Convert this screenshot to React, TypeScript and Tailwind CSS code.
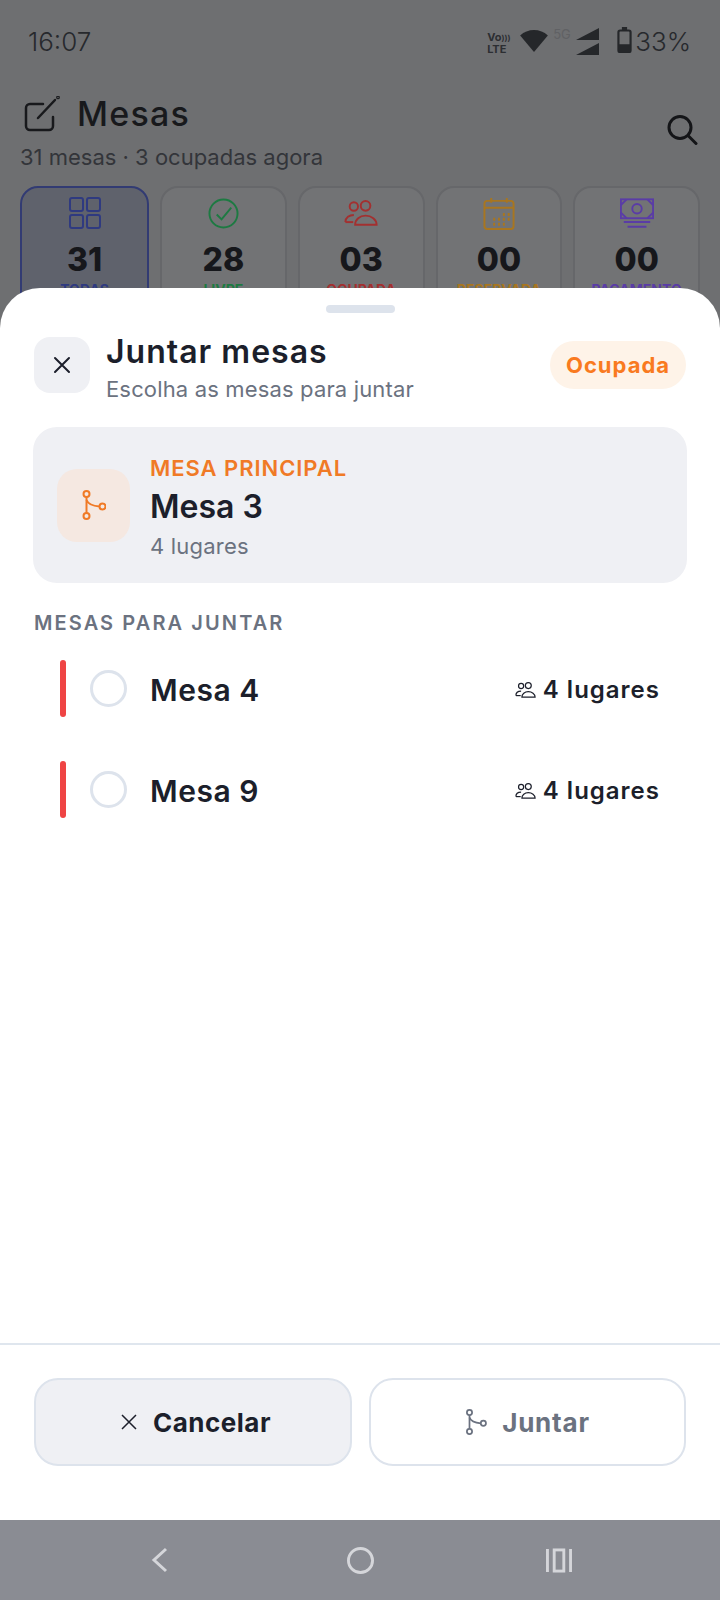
const F = "font-['Inter','Liberation_Sans',sans-serif]";

function Merge({ className, sw = 2 }: { className: string; sw?: number }) {
  return (
    <svg viewBox="0 0 24 30" fill="none" stroke="currentColor" strokeWidth={sw} className={className}>
      <circle cx="4.500" cy="4" r="3" />
      <circle cx="4.500" cy="26" r="3" />
      <circle cx="20.500" cy="16.500" r="3" />
      <path d="M4.500 7V23" />
      <path d="M4.500 10C6 14 11 16 17.500 16.500" />
    </svg>
  );
}

function Users({ className, sw = 1.5 }: { className: string; sw?: number }) {
  return (
    <svg viewBox="0 0 26 20" fill="none" stroke="currentColor" strokeWidth={sw} className={className}>
      <circle cx="7.500" cy="5" r="3.200" />
      <circle cx="16.500" cy="4.500" r="3.700" />
      <path d="M1 17c0-3.500 3-5.500 6.500-5.500" />
      <path d="M1 17h6" />
      <path d="M8.500 19c0-4 3.500-7 8-7s8.500 3 8.500 7Z" />
    </svg>
  );
}

function StatCard({ n, label, color, active, icon }: { n: string; label: string; color: string; active?: boolean; icon: React.ReactNode }) {
  return (
    <div className={`flex h-[130px] flex-col items-center rounded-[18px] border-2 pt-[3px] ${active ? "w-[129px] border-[#323b73] bg-[#5f626c]" : "flex-1 border-[#66676a] bg-[#727375]"}`}>
      <div className="flex h-[44px] items-center justify-center" style={{ color }}>{icon}</div>
      <div className="mt-[5px] text-[32px] leading-[40px] font-extrabold text-[#16171b]">{n}</div>
      <div className="mt-[2px] text-[14px] leading-[16px] font-bold whitespace-nowrap" style={{ color }}>{label}</div>
    </div>
  );
}

function Row({ name }: { name: string }) {
  return (
    <div className="flex h-[101px] items-start px-[60px]">
      <div className="h-[57px] w-[6px] rounded-full bg-[#ef4444]" />
      <div className="mt-[10px] ml-[24px] h-[37px] w-[37px] rounded-full border-[3px] border-[#dde3ec]" />
      <div className="mt-[10px] ml-[23px] flex-1 text-[30px] leading-[40px] font-semibold tracking-[0.5px] text-[#1c1f2b]">{name}</div>
      <div className="mt-[10px] flex items-center gap-[7px] text-[#1c1f2b]">
        <Users className="h-[16px] w-[21px]" sw={1.5} />
        <span className="text-[24px] leading-[40px] font-semibold tracking-[1px]">4 lugares</span>
      </div>
    </div>
  );
}

export default function App() {
  return (
    <div className={`${F} relative h-[1600px] w-[720px] overflow-hidden bg-[#6e6f71]`}>
      {/* Dimmed page behind the sheet */}
      <div className="flex h-[86px] items-start justify-between pt-[24px] pr-[29px] pl-[28px] text-[#27292d]">
        <span className="text-[26px] leading-[36px] font-light">16:07</span>
        <div className="flex items-start">
          <div className="mt-[8px] w-[22px] text-[11px] leading-[11px] font-bold whitespace-nowrap text-[#2c2e32]">Vo<span className="text-[8px]">)))</span><br />LTE</div>
          <svg viewBox="0 0 30 26" className="mt-[5px] ml-[11px] h-[24px] w-[28px]" fill="#25272a"><path d="M15 25L0 7C8-1 22-1 30 7Z" /></svg>
          <span className="mt-[3px] ml-[5px] w-[20px] text-[13px] leading-[14px] text-[#606164]">5G</span>
          <svg viewBox="0 0 23 27" className="mt-[4px] ml-[3px] h-[27px] w-[23px]" fill="#25272a"><path d="M0 12L23 0V12ZM0 27L23 15V27Z" /></svg>
          <svg viewBox="0 0 16 30" className="mt-[3px] ml-[18px] h-[26px] w-[15px]" fill="none"><rect x="1" y="4" width="14" height="25" rx="2" stroke="#25272a" strokeWidth="2.500" /><rect x="5" y="0" width="6" height="4" fill="#25272a" /><rect x="1" y="20" width="14" height="9" rx="1" fill="#25272a" /></svg>
          <span className="ml-[3px] text-[26px] leading-[36px] font-light">33%</span>
        </div>
      </div>
      <div className="flex items-start justify-between pr-[22px] pl-[20px]">
        <div>
          <div className="flex h-[56px] items-center pl-[4px]">
            <svg viewBox="0 0 36 36" className="h-[36px] w-[36px]" fill="none" stroke="#18191c" strokeWidth="2.500" strokeLinecap="round">
              <path d="M19 8H6a4 4 0 0 0-4 4v18a4 4 0 0 0 4 4h19a4 4 0 0 0 4-4V21" />
              <path d="M14 22L31 4" />
              <circle cx="34" cy="1.500" r="0.600" />
            </svg>
            <span className="ml-[17px] text-[34px] leading-[44px] font-medium tracking-[1.2px] text-[#18191c]">Mesas</span>
          </div>
          <div className="text-[22px] leading-[30px] text-[#33353a]">31 mesas · 3 ocupadas agora</div>
        </div>
        <svg viewBox="0 0 30 30" className="mt-[29px] h-[30px] w-[31px]" fill="none" stroke="#141518" strokeWidth="3" strokeLinecap="round">
          <circle cx="12.500" cy="12.500" r="11" /><path d="M21 21L28.500 28.500" />
        </svg>
      </div>
      <div className="mt-[14px] flex gap-[11px] px-[20px]">
        <StatCard n="31" label="TODAS" color="#2f3a80" active icon={
          <svg viewBox="0 0 32 32" className="h-[32px] w-[32px]" fill="none" stroke="currentColor" strokeWidth="2"><rect x="1" y="1" width="13" height="13" rx="2" /><rect x="18" y="1" width="13" height="13" rx="2" /><rect x="1" y="18" width="13" height="13" rx="2" /><rect x="18" y="18" width="13" height="13" rx="2" /></svg>
        } />
        <StatCard n="28" label="LIVRE" color="#1d7a42" icon={
          <svg viewBox="0 0 32 32" className="h-[31px] w-[31px]" fill="none" stroke="currentColor" strokeWidth="2"><circle cx="16" cy="16" r="14.500" /><path d="M9 17l5 5 10-12" /></svg>
        } />
        <StatCard n="03" label="OCUPADA" color="#a33030" icon={<Users className="h-[26px] w-[34px]" sw={1.500} />} />
        <StatCard n="00" label="RESERVADA" color="#a87620" icon={
          <svg viewBox="0 0 32 34" className="h-[33px] w-[32px]" fill="none" stroke="currentColor" strokeWidth="2"><rect x="1" y="4" width="30" height="29" rx="3" /><path d="M1 11H31M8 1V6M24 1V6" /><path strokeWidth="3" d="M10 23h2M15 23h2M20 23h2M25 23h2M10 28h2M15 28h2M20 28h2M20 18h2M25 18h2" /></svg>
        } />
        <StatCard n="00" label="PAGAMENTO" color="#5a3ca6" icon={
          <svg viewBox="0 0 36 32" className="h-[31px] w-[34px]" fill="none" stroke="currentColor" strokeWidth="2"><rect x="1" y="1" width="34" height="20" /><circle cx="18" cy="11" r="5" /><path d="M7 1L1 7M29 1L35 7M7 21L1 15M29 21L35 15M4 25H32M8 30H28" /></svg>
        } />
      </div>

      {/* Bottom sheet, above the dimmed page */}
      <div className="absolute inset-x-0 top-[288px] flex h-[1232px] flex-col rounded-t-[40px] bg-white">
        <div className="flex justify-center pt-[17px]">
          <div className="h-[8px] w-[69px] rounded-full bg-[#dde3ec]" />
        </div>
        <div className="mt-[24px] flex items-start px-[34px]">
          <div className="flex h-[56px] w-[56px] items-center justify-center rounded-[16px] bg-[#eff0f4]">
            <svg viewBox="0 0 18 18" className="h-[18px] w-[18px]" stroke="#1c1f2b" strokeWidth="2" strokeLinecap="round"><path d="M2 2L16 16M16 2L2 16" /></svg>
          </div>
          <div className="ml-[16px] flex-1">
            <div className="-mt-[5px] text-[32px] leading-[40px] font-semibold tracking-[1px] text-[#1c1f2b]">Juntar mesas</div>
            <div className="mt-[2px] text-[22px] leading-[30px] tracking-[0.15px] text-[#6b7280]">Escolha as mesas para juntar</div>
          </div>
          <div className="mt-[4px] flex h-[48px] w-[136px] items-center justify-center rounded-full bg-[#fef3e8] text-[22px] font-bold tracking-[1px] text-[#f97a1f]">Ocupada</div>
        </div>
        <div className="mx-[33px] mt-[23px] flex h-[156px] items-center rounded-[24px] bg-[#eff0f4] pl-[24px]">
          <div className="flex h-[73px] w-[73px] items-center justify-center rounded-[20px] bg-[#f5e8e1] text-[#f07a26]">
            <Merge className="h-[30px] w-[24px]" />
          </div>
          <div className="mt-[4px] ml-[20px]">
            <div className="text-[22px] leading-[28px] font-semibold tracking-[0.95px] text-[#f07a26]">MESA PRINCIPAL</div>
            <div className="mt-[5px] text-[32px] leading-[40px] font-semibold text-[#1c1f2b]">Mesa 3</div>
            <div className="mt-[4px] text-[22px] leading-[30px] tracking-[0.2px] text-[#6b7280]">4 lugares</div>
          </div>
        </div>
        <div className="mt-[27px] pl-[34px] text-[20px] leading-[26px] font-semibold tracking-[2.1px] text-[#6b7280]">MESAS PARA JUNTAR</div>
        <div className="mt-[24px]">
          <Row name="Mesa 4" />
          <Row name="Mesa 9" />
        </div>
        <div className="mt-auto flex h-[177px] gap-[17px] border-t-2 border-[#dfe6ee] px-[34px] pt-[33px]">
          <div className="flex h-[88px] w-[318px] items-center justify-center gap-[16px] rounded-[24px] border-2 border-[#dde3ec] bg-[#eff0f4] pl-[6px] text-[#1c1f2b]">
            <svg viewBox="0 0 16 16" className="h-[16px] w-[16px]" stroke="currentColor" strokeWidth="1.500"><path d="M1 1L15 15M15 1L1 15" /></svg>
            <span className="text-[26px] font-bold tracking-[0.5px]">Cancelar</span>
          </div>
          <div className="flex h-[88px] flex-1 items-center justify-center gap-[15px] rounded-[24px] border-2 border-[#dde3ec] bg-white text-[#6b7280]">
            <Merge className="h-[26px] w-[22px]" />
            <span className="text-[26px] font-bold tracking-[0.8px]">Juntar</span>
          </div>
        </div>
      </div>

      <div className="absolute inset-x-0 bottom-0 flex h-[80px] items-center bg-[#8a8c93] text-[#d5d6da]">
        <div className="flex w-full items-center justify-between pr-[147px] pl-[151px]">
          <svg viewBox="0 0 18 26" className="h-[26px] w-[18px]" fill="none" stroke="currentColor" strokeWidth="3"><path d="M15 2L3 13L15 24" /></svg>
          <svg viewBox="0 0 28 28" className="ml-[6px] h-[27px] w-[27px]" fill="none" stroke="currentColor" strokeWidth="3"><circle cx="14" cy="14" r="12.500" /></svg>
          <svg viewBox="0 0 28 26" className="h-[25px] w-[28px]" fill="none" stroke="currentColor" strokeWidth="3"><path d="M2 1V25M26 1V25" /><rect x="9" y="2" width="10" height="22" /></svg>
        </div>
      </div>
    </div>
  );
}
